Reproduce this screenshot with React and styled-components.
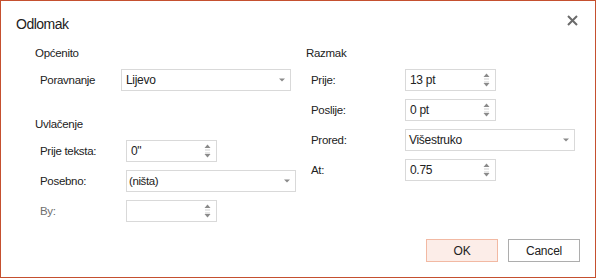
import React from 'react';
import styled, { createGlobalStyle } from 'styled-components';

const Global = createGlobalStyle`
  html, body { margin: 0; padding: 0; background: #fff; }
  body { font-family: "Liberation Sans", Arial, sans-serif; }
`;

const Dialog = styled.div`
  width: 596px;
  height: 278px;
  box-sizing: border-box;
  border: 1px solid #c5502f;
  background: #fff;
  display: flex;
  flex-direction: column;
`;

const Header = styled.div`
  display: flex;
  justify-content: space-between;
  align-items: flex-start;
  padding: 14px 17px 0 15px;
`;

const Title = styled.h1`
  margin: 0;
  font-size: 14px;
  line-height: 18px;
  font-weight: normal;
  color: #222;
  letter-spacing: -0.5px;
`;

const CloseButton = styled.button`
  border: 0;
  background: none;
  padding: 0;
  width: 11px;
  height: 11px;
  display: flex;
  cursor: pointer;
`;

const Body = styled.div`
  flex: 1;
  display: grid;
  grid-template-columns: 271px 1fr;
  padding: 12px 0 0 34px;
`;

const Column = styled.div`
  display: flex;
  flex-direction: column;
`;

const SectionTitle = styled.div`
  font-size: 11.5px;
  line-height: 16px;
  color: #222;
  letter-spacing: -0.3px;
  margin-top: ${(p) => p.$top || 0}px;
  margin-bottom: 8px;
`;

const Rows = styled.div`
  display: flex;
  flex-direction: column;
  gap: 8px;
`;

const Row = styled.div`
  display: flex;
  align-items: center;
  height: 22px;
  padding-left: 5px;
`;

const Label = styled.span`
  width: ${(p) => p.$w}px;
  flex: none;
  font-size: 11.5px;
  letter-spacing: -0.3px;
  color: ${(p) => (p.$disabled ? '#6e6e6e' : '#222')};
`;

const Field = styled.div`
  box-sizing: border-box;
  width: ${(p) => p.$w}px;
  height: 22px;
  border: 1px solid #d9d9d9;
  background: #fff;
  display: flex;
  align-items: center;
  padding-left: ${(p) => p.$pad}px;
`;

const FieldText = styled.span`
  flex: 1;
  font-size: 12px;
  letter-spacing: -0.3px;
  color: #222;
`;

const SmallText = styled(FieldText)`
  font-size: 11.5px;
  letter-spacing: -0.4px;
`;

const ArrowBox = styled.span`
  width: 17px;
  height: 20px;
  flex: none;
  display: flex;
  align-items: center;
  justify-content: center;
`;

const Footer = styled.div`
  display: flex;
  justify-content: flex-end;
  gap: 10px;
  padding: 0 15px 15px 0;
`;

const Button = styled.button`
  box-sizing: border-box;
  width: 72px;
  height: 23px;
  font-family: "Liberation Sans", Arial, sans-serif;
  font-size: 12px;
  letter-spacing: -0.2px;
  color: #222;
  background: ${(p) => (p.$primary ? '#fcede8' : '#fff')};
  border: 1px solid ${(p) => (p.$primary ? '#f2b9a3' : '#adadad')};
  padding: 0;
`;

const DropArrow = () => (
  <svg width="6" height="4" viewBox="0 0 6 4">
    <path d="M0 0.5 H6 L3 3.5 Z" fill="#8a8a8a" />
  </svg>
);

const SpinArrows = () => (
  <svg width="7" height="20" viewBox="0 0 7 20">
    <path d="M0.5 7 L3.5 3.5 L6.5 7 Z" fill="#8a8a8a" />
    <rect x="1" y="8.5" width="5" height="1" fill="#d0d0d0" />
    <rect x="1" y="11.5" width="5" height="1" fill="#d0d0d0" />
    <path d="M0.5 13 L3.5 16.5 L6.5 13 Z" fill="#8a8a8a" />
  </svg>
);

const Select = ({ w, pad, children, small }) => (
  <Field $w={w} $pad={pad}>
    {small ? <SmallText>{children}</SmallText> : <FieldText>{children}</FieldText>}
    <ArrowBox>
      <DropArrow />
    </ArrowBox>
  </Field>
);

const Spinner = ({ w, children }) => (
  <Field $w={w} $pad={4}>
    <FieldText>{children}</FieldText>
    <ArrowBox>
      <SpinArrows />
    </ArrowBox>
  </Field>
);

export default function App() {
  return (
    <>
      <Global />
      <Dialog>
        <Header>
          <Title>Odlomak</Title>
          <CloseButton aria-label="Zatvori">
            <svg width="11" height="11" viewBox="0 0 11 11">
              <path d="M1 1 L10 10 M10 1 L1 10" stroke="#6b6b6b" strokeWidth="2" />
            </svg>
          </CloseButton>
        </Header>
        <Body>
          <Column>
            <SectionTitle>Općenito</SectionTitle>
            <Rows>
              <Row>
                <Label $w={81}>Poravnanje</Label>
                <Select w={170} pad={4}>Lijevo</Select>
              </Row>
            </Rows>
            <SectionTitle $top={25}>Uvlačenje</SectionTitle>
            <Rows>
              <Row>
                <Label $w={86}>Prije teksta:</Label>
                <Spinner w={91}>0"</Spinner>
              </Row>
              <Row>
                <Label $w={86}>Posebno:</Label>
                <Select w={170} pad={2} small>(ništa)</Select>
              </Row>
              <Row>
                <Label $w={86} $disabled>By:</Label>
                <Spinner w={91}></Spinner>
              </Row>
            </Rows>
          </Column>
          <Column>
            <SectionTitle>Razmak</SectionTitle>
            <Rows>
              <Row>
                <Label $w={94}>Prije:</Label>
                <Spinner w={91}>13 pt</Spinner>
              </Row>
              <Row>
                <Label $w={94}>Poslije:</Label>
                <Spinner w={91}>0 pt</Spinner>
              </Row>
              <Row>
                <Label $w={94}>Prored:</Label>
                <Select w={170} pad={3}>Višestruko</Select>
              </Row>
              <Row>
                <Label $w={94}>At:</Label>
                <Spinner w={91}>0.75</Spinner>
              </Row>
            </Rows>
          </Column>
        </Body>
        <Footer>
          <Button $primary>OK</Button>
          <Button>Cancel</Button>
        </Footer>
      </Dialog>
    </>
  );
}
